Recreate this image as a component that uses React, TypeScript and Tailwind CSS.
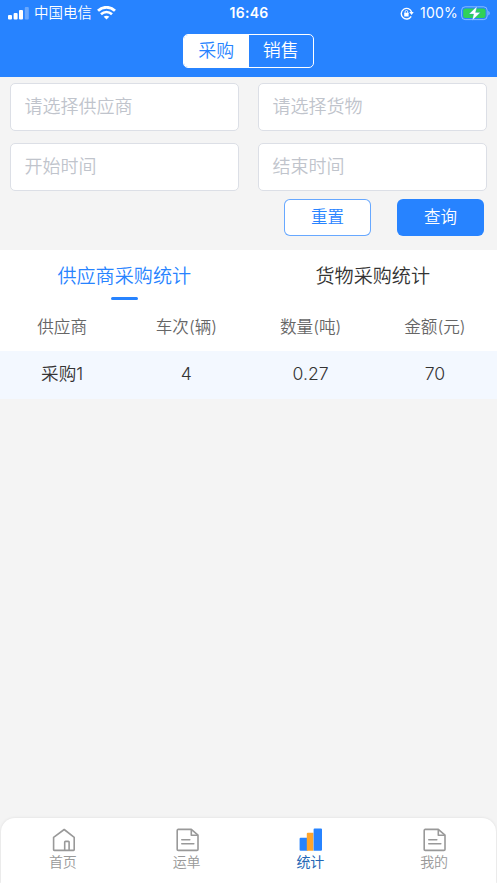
import { useState } from 'react';

const filters = ['请选择供应商', '请选择货物', '开始时间', '结束时间'];
const columns = ['供应商', '车次(辆)', '数量(吨)', '金额(元)'];
const rows = [['采购1', '4', '0.27', '70']];
const reports = ['供应商采购统计', '货物采购统计'];

function StatusBar() {
  return (
    <div className="flex h-[26px] items-center justify-between pr-[7px] pl-2 text-[14px] leading-[26px]">
      <div className="flex w-[160px] items-center">
        <svg className="h-[13px] w-[21px]" viewBox="0 0 21 13" fill="white">
          <rect x="0" y="8" width="4" height="4.6" rx="1" />
          <rect x="5.6" y="6" width="4" height="6.6" rx="1" />
          <rect x="11" y="3" width="4" height="9.6" rx="1" />
          <rect x="16.8" y="0" width="4" height="12.6" rx="1" opacity="0.3" />
        </svg>
        <span className="ml-[5px] text-[14.5px] font-[350]">中国电信</span>
        <svg className="ml-[5px] h-[14px] w-[19px]" viewBox="0 0 19 14" fill="none" stroke="white">
          <path d="M1 4.8C5.8.1 13.2.1 18 4.8" strokeWidth="2.8" />
          <path d="M4 8.2c3.2-3 7.8-3 11 0" strokeWidth="2.6" />
          <path d="M9.5 13.6 6.7 10.8c1.6-1.4 4-1.4 5.6 0z" fill="white" stroke="none" />
        </svg>
      </div>
      <span className="text-[14px] font-semibold tracking-[0.3px]">16:46</span>
      <div className="flex w-[160px] items-center justify-end">
        <svg className="h-[13px] w-[14px]" viewBox="0 0 14 13" fill="none" stroke="white">
          <path d="M11.2 9.3A5.3 5.3 0 1 1 11.6 5" strokeWidth="1.4" />
          <path d="M9.2 5h4.5l-2.1 3z" fill="white" stroke="none" />
          <rect x="4.2" y="5.8" width="4.4" height="3.6" rx="0.5" fill="white" stroke="none" />
          <path d="M5.1 6V4.8a1.3 1.3 0 0 1 2.6 0V6" strokeWidth="0.9" />
        </svg>
        <span className="ml-[6px] tracking-[0.2px]">100%</span>
        <svg className="ml-[3px] h-[15px] w-[29px]" viewBox="0 0 29 15">
          <rect x="0.6" y="0.8" width="25.6" height="12.8" rx="3.6" fill="none" stroke="white" strokeOpacity="0.45" />
          <rect x="2.2" y="2.4" width="22.4" height="9.6" rx="2.2" fill="#30d158" />
          <path d="M27.4 5v4.4c1.7-.7 1.7-3.7 0-4.4z" fill="white" fillOpacity="0.5" />
          <path d="M16 .2 8 8h4.7l-1.5 6.6 8.1-8.2h-4.8z" fill="white" stroke="#2783ff" strokeWidth="0.3" />
        </svg>
      </div>
    </div>
  );
}

function HomeIcon() {
  return (
    <svg className="size-6" viewBox="0 0 24 24" fill="none" stroke="#999999" strokeWidth="1.6" strokeLinejoin="round">
      <path d="M2.6 9.3 13.2 1.5 23.2 9.3V21.8a.6.6 0 0 1-.6.6H3.2a.6.6 0 0 1-.6-.6z" />
      <path d="M13.7 22.2v-8a.8.8 0 0 1 .8-.8h2.8a.8.8 0 0 1 .8.8v8" />
    </svg>
  );
}

function DocIcon() {
  return (
    <svg className="size-6" viewBox="0 0 24 24" fill="none" stroke="#999999" strokeWidth="1.6" strokeLinejoin="round">
      <path d="M3.2 1.4h13.1l6.7 5.8v14.2a1 1 0 0 1-1 1H3.2a1 1 0 0 1-1-1v-19a1 1 0 0 1 1-1z" />
      <path d="M16.3 1.4v5.8H23" />
      <path d="M6.8 11.7h8M6.8 15.8h12" strokeLinecap="round" />
    </svg>
  );
}

function ChartIcon() {
  return (
    <svg className="size-6" viewBox="0 0 24 24">
      <path d="M2.6 9.8h7v13h-7a1 1 0 0 1-1-1v-11a1 1 0 0 1 1-1z" fill="#2783ff" />
      <path d="M9.8 4.8h5.6v18H8.8v-17a1 1 0 0 1 1-1z" fill="#ffa52c" />
      <path d="M16.6.4H23a1 1 0 0 1 1 1v20.4a1 1 0 0 1-1 1h-7.4V1.4a1 1 0 0 1 1-1z" fill="#2783ff" />
    </svg>
  );
}

const navItems = [
  { label: '首页', icon: HomeIcon },
  { label: '运单', icon: DocIcon },
  { label: '统计', icon: ChartIcon },
  { label: '我的', icon: DocIcon },
];

export default function App() {
  const [report, setReport] = useState(0);
  const [nav, setNav] = useState(2);

  return (
    <div className="flex h-screen flex-col overflow-hidden bg-[#f4f4f4] font-[Inter,'Noto_Sans_CJK_SC',sans-serif] text-[#333333]">
      <header className="h-[77px] shrink-0 bg-[#2783ff] text-white">
        <StatusBar />
        <div className="mx-auto mt-[8px] flex h-[34px] w-[131px] overflow-hidden rounded-[5px] border border-white text-[18px] leading-[32px] font-[350]">
          <button className="w-1/2 bg-white text-[#2783ff]">采购</button>
          <button className="w-1/2">销售</button>
        </div>
      </header>

      {/* Filters */}
      <section className="h-[173px] shrink-0 px-[10px] pt-[6px]">
        <div className="grid grid-cols-2 gap-x-[19px] gap-y-3">
          {filters.map((label) => (
            <div
              key={label}
              className="h-12 rounded-[5px] border border-[#dcdfe6] bg-white px-[13.5px] text-[18px] leading-[46px] font-[350] text-[#c0c4cc]"
            >
              {label}
            </div>
          ))}
        </div>
        <div className="mt-2 mr-[3px] flex justify-end gap-[26px] text-[16.5px] font-[350]">
          <button className="h-[37px] w-[87px] rounded-md border border-[#2783ff]/70 bg-white leading-[33px] text-[#2783ff]">
            重置
          </button>
          <button className="h-[37px] w-[87px] rounded-md bg-[#2783ff] leading-[35px] text-white">查询</button>
        </div>
      </section>

      {/* Report tabs */}
      <div className="grid h-[52px] shrink-0 grid-cols-2 bg-white text-[19.1px] font-[350]">
        {reports.map((label, i) => (
          <button
            key={label}
            onClick={() => setReport(i)}
            className={`flex flex-col items-center ${report === i ? 'text-[#2783ff]' : ''}`}
          >
            <span className="h-[47px] leading-[53px]">{label}</span>
            {report === i && <span className="h-[3px] w-[27px] rounded-full bg-[#2783ff]" />}
          </button>
        ))}
      </div>

      <div className="grid h-[49px] shrink-0 grid-cols-4 bg-white text-center text-[16.6px] leading-[51px] font-[350] text-[#666666]">
        {columns.map((name) => (
          <span key={name}>{name}</span>
        ))}
      </div>
      {rows.map((row) => (
        <div key={row[0]} className="grid h-[48px] shrink-0 grid-cols-4 bg-[#f3f8ff] text-center text-[17.6px] leading-[46px] font-[350]">
          {row.map((cell, i) => (
            <span key={i}>{cell}</span>
          ))}
        </div>
      ))}

      <nav className="mx-px mt-auto grid h-[65px] shrink-0 grid-cols-4 rounded-t-[14px] bg-white pt-[10px] text-[14px] shadow-[0_0_3px_rgba(0,0,0,0.1)]">
        {navItems.map(({ label, icon: Icon }, i) => (
          <button
            key={label}
            onClick={() => setNav(i)}
            className={`flex flex-col items-center ${nav === i ? 'text-[#2467b5]' : 'font-[350] text-[#999999]'}`}
          >
            <Icon />
            <span className="leading-5">{label}</span>
          </button>
        ))}
      </nav>
    </div>
  );
}
